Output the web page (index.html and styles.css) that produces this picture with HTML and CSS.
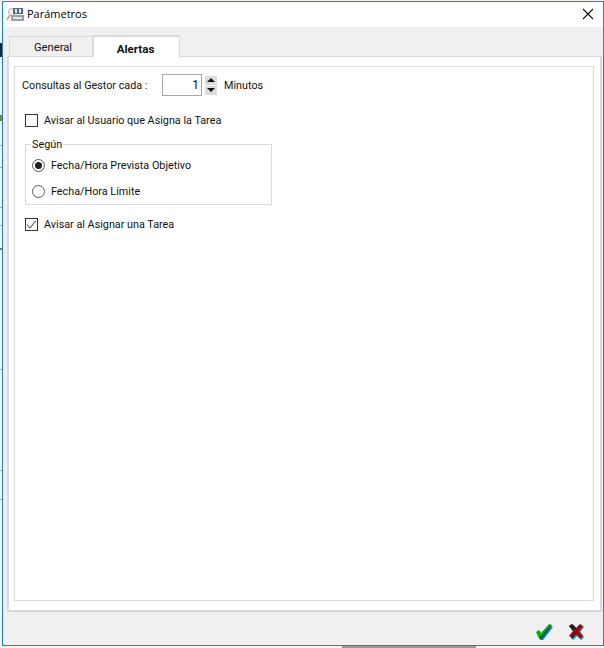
FILE: index.html
```html
<!DOCTYPE html>
<html>
<head>
    <meta charset="utf-8">
    <title>Parámetros</title>
    <link rel="stylesheet" href="styles.css">
</head>
<body>
<div class="window">
    <!--titulo-->
    <div class="title-bar">
        <svg class="app-icon" width="18" height="16" viewBox="0 0 18 16">
            <path d="M1 14 L4 9" stroke="#d0ae78" stroke-width="2" fill="none"/>
            <circle cx="6" cy="6" r="3.5" fill="#eee" stroke="#b5b5b5"/>
            <rect x="7" y="2" width="10" height="6" fill="#5b6a80"/>
            <rect x="9" y="3" width="2" height="4" fill="#dfe4ea"/>
            <rect x="13" y="3" width="2" height="4" fill="#dfe4ea"/>
            <rect x="5" y="9" width="13" height="6" fill="#9a9fa6"/>
            <rect x="7" y="11" width="9" height="2" fill="#e4e6e9"/>
        </svg>
        <span class="title-text">Parámetros</span>
        <svg class="close-icon" width="12" height="12" viewBox="0 0 12 12">
            <path d="M1 1 L11 11 M11 1 L1 11" stroke="#111" stroke-width="1.1" fill="none"/>
        </svg>
    </div>
    <div class="body-area">
        <div class="tabs">
            <div class="tab">General</div>
            <div class="tab active">Alertas</div>
        </div>
        <div class="tab-panel">
            <div class="inner">
                <div class="row-gestor">
                    <span class="lbl-gestor">Consultas al Gestor cada :</span>
                    <span class="num-box">1</span>
                    <span class="spin">
                        <span class="spin-btn"><i class="arrow-up"></i></span>
                        <span class="spin-btn"><i class="arrow-down"></i></span>
                    </span>
                    <span class="lbl-min">Minutos</span>
                </div>
                <div class="check-row first-check">
                    <span class="check"></span>
                    <span>Avisar al Usuario que Asigna la Tarea</span>
                </div>
                <div class="group">
                    <span class="group-title">Según</span>
                    <div class="radio-row">
                        <span class="radio on"></span>
                        <span>Fecha/Hora Prevista Objetivo</span>
                    </div>
                    <div class="radio-row">
                        <span class="radio"></span>
                        <span>Fecha/Hora Límite</span>
                    </div>
                </div>
                <div class="check-row">
                    <span class="check">
                        <svg width="11" height="11" viewBox="0 0 11 11"><path d="M1 5.5 L4 9 L10 1.5" stroke="#555" stroke-width="1.1" fill="none"/></svg>
                    </span>
                    <span>Avisar al Asignar una Tarea</span>
                </div>
            </div>
        </div>
    </div>
    <div class="footer">
        <svg width="20" height="18" viewBox="0 0 20 18">
            <path d="M2 11 L5 9 L7 12 L15 3 L18 4 L8 17 L5 17 Z" fill="#008c96"/>
            <path d="M1 9 L4 7 L6 10 L14 1 L17 2 L7 15 L4 15 Z" fill="#00b400"/>
            <path d="M4 15 L7 15 L17 2 L15 3 L6.5 13 Z" fill="#0c2f8c"/>
        </svg>
        <svg width="18" height="18" viewBox="0 0 18 18">
            <path d="M3 3 L6 2 L9 6 L13 2 L16 4 L12 9 L16 14 L13 17 L9 13 L5 17 L3 15 L6 10 Z" fill="#008c96"/>
            <path d="M1 3 L4 1 L8 5 L12 1 L15 3 L11 8 L15 13 L12 15 L8 11 L4 15 L1 13 L5 8 Z" fill="#a80010"/>
            <path d="M4 1 L8 5 L5 8 L1 3 Z M8 11 L4 15 L3 14 L7 9 Z" fill="#222"/>
        </svg>
    </div>
</div>
</body>
</html>
```
FILE: styles.css
```css
html,body{margin: 0;height: 100%;}
body{
	height: 648px;
	overflow: hidden;
	padding: 1px 0 2px 2px;
	box-sizing: border-box;
	background-color: #f4f4f4;
	/* restos de la ventana de atras */
	background-image: linear-gradient(#222,#222),linear-gradient(#7c8030,#7c8030),linear-gradient(#aaa,#aaa),linear-gradient(#aaa,#aaa),linear-gradient(#aaa,#aaa),linear-gradient(#aaa,#aaa),linear-gradient(#777,#777),linear-gradient(#aaa,#aaa),linear-gradient(#aaa,#aaa),linear-gradient(#aaa,#aaa),linear-gradient(#999,#999);
	background-size: 2px 14px,2px 6px,2px 1px,2px 1px,2px 1px,2px 1px,2px 2px,2px 1px,2px 1px,2px 1px,134px 2px;
	background-position: 0 43px,0 115px,0 145px,0 167px,0 207px,0 225px,0 248px,0 369px,0 470px,0 499px,342px 646px;
	background-repeat: no-repeat;
	font-family: Roboto,"Liberation Sans",Arial,sans-serif;
	font-size: 10.8px;
	color: #111;
}
.window{
	height: 100%;
	box-sizing: border-box;
	display: flex;
	flex-direction: column;
	border: 1px solid #1883d7;
	background: #f0f0f0;
}
.title-bar{
	height: 25px;
	display: flex;
	align-items: center;
	padding: 0 9px 2px 3px;
	box-sizing: border-box;
	background: #fff;
}
.app-icon{margin-right: 3px;}
.title-text{
	flex: 1;
	font-family: "Open Sans",sans-serif;
	font-size: 11px;
	color: #000;
}
.body-area{
	flex: 1;
	display: flex;
	flex-direction: column;
	padding: 6px 1px 0 4px;
}
.tabs{
	display: flex;
	align-items: flex-end;
	height: 23px;
	padding-left: 2px;
	position: relative;
	z-index: 1;
}
.tab{
	width: 84px;
	height: 20px;
	line-height: 21px;
	text-align: center;
	padding-left: 4px;
	font-size: 11.2px;
	border: 1px solid #d9d9d9;
	border-bottom: none;
	box-sizing: border-box;
}
.tab.active{
	width: 87px;
	height: 23px;
	line-height: 24px;
	margin-bottom: -2px;
	padding: 0 2px 0 0;
	background: #fff;
	font-weight: bold;
	font-size: 11.6px;
	border-width: 2px 1px 0 1px;
}
.tab-panel{
	height: 556px;
	box-sizing: border-box;
	border: 2px solid #d9d9d9;
	border-top-width: 1px;
	background: #fff;
	padding: 9px 6px 9px 5px;
}
.inner{
	height: 100%;
	box-sizing: border-box;
	border: 1px solid #dcdcdc;
	padding: 7px 10px 0 7px;
}
.row-gestor{
	display: flex;
	align-items: center;
	height: 22px;
}
.lbl-gestor{width: 140px;white-space: nowrap;}
.num-box{
	width: 40px;
	height: 22px;
	box-sizing: border-box;
	border: 1px solid #a8a8a8;
	text-align: right;
	padding-right: 2px;
	line-height: 20px;
	font-size: 12px;
}
.spin{
	display: flex;
	flex-direction: column;
	gap: 1px;
	margin-left: 3px;
}
.spin-btn{
	width: 12px;
	height: 9px;
	background: #dcdcdc;
	box-sizing: border-box;
	display: flex;
	align-items: center;
	justify-content: center;
}
.arrow-up,.arrow-down{
	width: 0;
	height: 0;
	border-left: 4px solid transparent;
	border-right: 4px solid transparent;
}
.arrow-up{border-bottom: 4px solid #111;}
.arrow-down{border-top: 4px solid #111;}
.lbl-min{margin-left: 7px;}
.check-row{
	display: flex;
	align-items: center;
	height: 14px;
	margin-left: 3px;
	margin-top: 12px;
}
.first-check{margin-top: 17px;}
.check{
	width: 13px;
	height: 13px;
	box-sizing: border-box;
	border: 1px solid #333;
	background: #fff;
	margin-right: 6px;
	display: flex;
}
.group{
	position: relative;
	width: 247px;
	height: 61px;
	box-sizing: border-box;
	border: 1px solid #d9d9d9;
	margin: 17px 0 0 3px;
	padding: 13px 0 0 6px;
}
.group-title{
	position: absolute;
	top: -7px;
	left: 5px;
	padding: 0 1px;
	background: #fff;
	line-height: 14px;
}
.radio-row{
	display: flex;
	align-items: center;
	height: 14px;
	margin-bottom: 12px;
}
.radio{
	width: 13px;
	height: 13px;
	box-sizing: border-box;
	border: 1px solid #555;
	border-radius: 50%;
	margin-right: 6px;
	display: flex;
	align-items: center;
	justify-content: center;
}
.radio.on:after{
	content: '';
	width: 7px;
	height: 7px;
	border-radius: 50%;
	background: #222;
}
.footer{
	height: 33px;
	display: flex;
	align-items: center;
	justify-content: flex-end;
	gap: 13px;
	padding: 6px 17px 0 0;
	box-sizing: border-box;
}
```
